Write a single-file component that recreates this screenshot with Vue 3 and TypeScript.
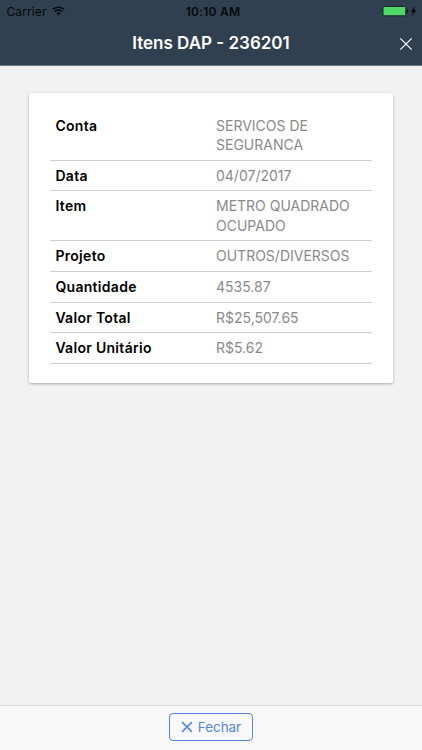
<script setup lang="ts">
interface Detail {
  label: string
  value: string
}

const title = 'Itens DAP - 236201'

const details: Detail[] = [
  { label: 'Conta', value: 'SERVICOS DE SEGURANCA' },
  { label: 'Data', value: '04/07/2017' },
  { label: 'Item', value: 'METRO QUADRADO OCUPADO' },
  { label: 'Projeto', value: 'OUTROS/DIVERSOS' },
  { label: 'Quantidade', value: '4535.87' },
  { label: 'Valor Total', value: 'R$25,507.65' },
  { label: 'Valor Unitário', value: 'R$5.62' },
]
</script>

<template>
  <div class="screen">
    <header class="header">
      <div class="status">
        <div class="carrier">
          <span>Carrier</span>
          <svg class="wifi" viewBox="0 0 13 10" width="13" height="10">
            <path d="M.8 3.5a8.1 8.1 0 0 1 11.4 0M2.8 5.6a5.2 5.2 0 0 1 7.4 0" fill="none" stroke="#05080b" stroke-width="1.5" />
            <path d="M4.4 7.2a3 3 0 0 1 4.2 0L6.5 9.4z" fill="#05080b" />
          </svg>
        </div>
        <span class="time">10:10 AM</span>
        <div class="power">
          <svg viewBox="0 0 36 12" width="36" height="12">
            <rect x="1" y="1.4" width="22.8" height="9.4" rx="1.4" fill="#4cd964" stroke="#18242c" />
            <path d="M24.8 4.1c1.8.4 1.8 3.4 0 3.8z" fill="#05080b" />
            <path d="M32.6 1.7 29 6.7h2.2l-1 3.8 3.9-5.2h-2.4z" fill="#05080b" stroke="#05080b" stroke-width=".3" />
          </svg>
        </div>
      </div>
      <div class="navbar">
        <h1 class="title">{{ title }}</h1>
        <button class="close" type="button" aria-label="Fechar">
          <svg viewBox="0 0 14 14" width="14" height="14">
            <path d="M1.3 1.3 12.7 12.7M12.7 1.3 1.3 12.7" fill="none" stroke="#fff" stroke-width="1.2" />
          </svg>
        </button>
      </div>
    </header>

    <main class="content">
      <section class="card">
        <dl class="details">
          <div v-for="item in details" :key="item.label" class="row">
            <dt>{{ item.label }}</dt>
            <dd>{{ item.value }}</dd>
          </div>
        </dl>
      </section>
    </main>

    <footer class="footer">
      <button class="action" type="button">
        <svg viewBox="0 0 12 12" width="12" height="12">
          <path d="M1.1 1.1 10.9 10.9M10.9 1.1 1.1 10.9" fill="none" stroke="#5585e6" stroke-width="1.5" />
        </svg>
        <span>Fechar</span>
      </button>
    </footer>
  </div>
</template>

<style>
body {
  background: #f2f2f2;
}
</style>

<style scoped>
.screen {
  display: flex;
  flex-direction: column;
  height: 750px;
  background: #f2f2f2;
  font-family: Inter, "Liberation Sans", sans-serif;
}

button {
  margin: 0;
  padding: 0;
  background: none;
  border: 0;
  font: inherit;
}

svg {
  display: block;
}

.header {
  box-sizing: border-box;
  flex: none;
  height: 66px;
  background: #314050;
  border-bottom: 1px solid #69747f;
}

.status {
  display: grid;
  grid-template-columns: 1fr auto 1fr;
  align-items: center;
  height: 22px;
  padding: 0 4px 0 6.5px;
  color: #05080b;
  font-size: 12px;
}

.carrier {
  display: flex;
  align-items: center;
  gap: 5px;
  letter-spacing: 0.1px;
}

.wifi {
  margin-top: -1px;
}

.time {
  padding-left: 1.5px;
  font-weight: 600;
  letter-spacing: 0.25px;
}

.power {
  display: flex;
  justify-content: flex-end;
  margin-top: -1px;
}

.navbar {
  display: grid;
  grid-template-columns: 1fr auto 1fr;
  align-items: center;
  height: 43px;
  padding: 0 9px;
}

.title {
  grid-column: 2;
  margin: 0;
  color: #fff;
  font-size: 17px;
  font-weight: 600;
  line-height: 43px;
}

.close {
  justify-self: end;
}

.content {
  flex: 1;
  padding: 27px 29px 0;
}

.card {
  box-sizing: border-box;
  height: 290px;
  padding: 17.75px 21px 0 21.4px;
  background: #fff;
  border-radius: 2px;
  box-shadow: 0 1px 3px rgba(0, 0, 0, 0.3);
}

.details {
  margin: 0;
  font-size: 14px;
  line-height: 19.4px;
}

.row {
  display: grid;
  grid-template-columns: 160.6px 1fr;
  padding: 5.1px 0 5.1px 5px;
  border-bottom: 1px solid #cecece;
}

dt {
  color: #000;
  font-weight: 600;
  letter-spacing: 0.3px;
}

dd {
  margin: 0;
  color: #8a8a8a;
}

.footer {
  box-sizing: border-box;
  display: flex;
  flex: none;
  justify-content: center;
  height: 45px;
  padding-top: 7px;
  background: #f8f8f8;
  border-top: 1px solid #dedede;
}

.action {
  box-sizing: border-box;
  display: flex;
  align-items: center;
  justify-content: center;
  gap: 5px;
  width: 84px;
  height: 28px;
  color: #5585e6;
  font-size: 13.4px;
  border: 1px solid #5585e6;
  border-radius: 4px;
}
</style>
